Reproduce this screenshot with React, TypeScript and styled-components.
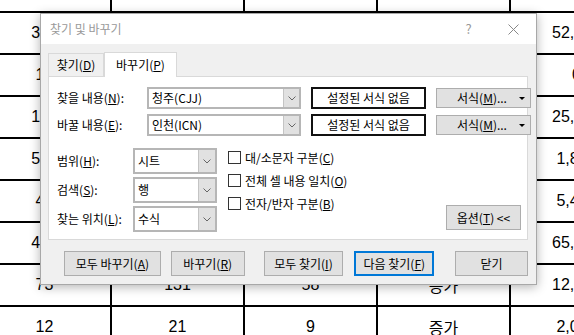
import React from "react";
import styled, { createGlobalStyle } from "styled-components";

const Global = createGlobalStyle`
  html, body { margin: 0; padding: 0; width: 574px; height: 335px; overflow: hidden; background: #fff; }
  body { font-family: "Noto Sans CJK KR", sans-serif; }
`;

const Page = styled.div`
  position: relative;
  width: 574px;
  height: 335px;
  overflow: hidden;
`;

const Sheet = styled.div`
  display: grid;
  grid-template-columns: repeat(5, 133px);
  grid-auto-rows: 42px;
  margin: -29px 0 0 -21px;
`;

const Cell = styled.div`
  box-sizing: border-box;
  border-right: 2px solid #000;
  border-bottom: 2px solid #000;
  display: flex;
  align-items: center;
  justify-content: center;
  font-family: "Liberation Sans", "Noto Sans CJK KR", sans-serif;
  font-size: 16px;
  color: #000;
  white-space: nowrap;
`;

const Dialog = styled.div`
  position: absolute;
  left: 40px;
  top: 13px;
  width: 497px;
  box-sizing: border-box;
  border: 1px solid #a8a8a8;
  background: #f0f0f0;
  box-shadow: 0 2px 10px rgba(0, 0, 0, 0.3);
  font-family: "Noto Sans CJK KR", sans-serif;
  font-size: 12px;
  line-height: 14px;
  color: #000;
`;

const TitleBar = styled.div`
  height: 30px;
  background: #fff;
  display: flex;
  align-items: center;
  padding-left: 9px;
`;

const Title = styled.div`
  color: #999;
  flex: 1;
`;

const TitleBtn = styled.div`
  width: 45px;
  height: 30px;
  display: flex;
  align-items: center;
  justify-content: center;
  color: #999;
  font-size: 13px;
`;

const Body = styled.div`
  padding: 8px 8px 8px 7px;
`;

const Tabs = styled.div`
  display: flex;
  align-items: flex-end;
  height: 24px;
`;

const Tab = styled.div<{ $active?: boolean; $w: number }>`
  box-sizing: border-box;
  width: ${(p) => p.$w}px;
  height: ${(p) => (p.$active ? 25 : 23)}px;
  margin-bottom: ${(p) => (p.$active ? -1 : 0)}px;
  background: ${(p) => (p.$active ? "#fff" : "#f0f0f0")};
  border: 1px solid #d9d9d9;
  border-bottom: none;
  position: relative;
  z-index: ${(p) => (p.$active ? 1 : 0)};
  display: flex;
  align-items: center;
  justify-content: center;
`;

const Panel = styled.div`
  box-sizing: border-box;
  height: 164px;
  background: #fff;
  border: 1px solid #d9d9d9;
  padding: 10px 6px 0 8px;
`;

const FindRow = styled.div<{ $mt?: number }>`
  display: grid;
  grid-template-columns: 80px 154px 115px 95px;
  column-gap: 10px;
  align-items: center;
  height: 22px;
  margin-top: ${(p) => p.$mt ?? 0}px;
`;

const Label = styled.div`
  white-space: nowrap;
`;

const Combo = styled.div<{ $h: number }>`
  box-sizing: border-box;
  height: ${(p) => p.$h}px;
  border: 2px solid #b6b6b6;
  background: #fff;
  display: flex;
  align-items: stretch;
`;

const ComboText = styled.div`
  flex: 1;
  display: flex;
  align-items: center;
  padding-left: 3px;
  white-space: nowrap;
`;

const DropBtn = styled.div<{ $w: number }>`
  width: ${(p) => p.$w}px;
  background: #e1e1e1;
  border-left: 1px solid #c4c4c4;
  display: flex;
  align-items: center;
  justify-content: center;
`;

const FormatBox = styled.div`
  box-sizing: border-box;
  height: 22px;
  border: 2px solid #111;
  display: flex;
  align-items: center;
  justify-content: center;
  white-space: nowrap;
`;

const FormatBtn = styled.div`
  box-sizing: border-box;
  height: 20px;
  background: #e1e1e1;
  border: 1px solid #adadad;
  display: flex;
  align-items: center;
  padding: 0 5px 0 20px;
  white-space: nowrap;
`;

const Caret = styled.span`
  margin-left: auto;
  width: 0;
  height: 0;
  border-left: 3px solid transparent;
  border-right: 3px solid transparent;
  border-top: 3px solid #000;
`;

const Lower = styled.div`
  display: flex;
  margin-top: 12px;
`;

const OptGrid = styled.div`
  display: grid;
  grid-template-columns: 76px 84px;
  grid-auto-rows: 26px;
  row-gap: 3px;
  align-items: center;
`;

const Checks = styled.div`
  display: flex;
  flex-direction: column;
  gap: 10px;
  margin-left: 11px;
  padding-top: 3px;
`;

const CheckItem = styled.label`
  display: flex;
  align-items: center;
  gap: 4px;
  height: 13px;
  white-space: nowrap;
`;

const Box = styled.span`
  box-sizing: border-box;
  width: 13px;
  height: 13px;
  border: 1px solid #333;
  background: #fff;
`;

const Button = styled.div<{ $w: number; $ml?: number; $primary?: boolean }>`
  box-sizing: border-box;
  width: ${(p) => p.$w}px;
  height: 25px;
  margin-left: ${(p) => p.$ml ?? 0}px;
  background: #e1e1e1;
  border: ${(p) => (p.$primary ? "2px solid #0078d7" : "1px solid #adadad")};
  display: flex;
  align-items: center;
  justify-content: center;
  white-space: nowrap;
`;

const OptionsBtn = styled(Button)`
  margin-left: auto;
  align-self: flex-end;
  margin-bottom: 2px;
`;

const ButtonRow = styled.div`
  display: flex;
  margin-top: 11px;
  padding-left: 16px;
`;

const Chevron = () => (
  <svg width="8" height="5" viewBox="0 0 8 5">
    <polyline points="0.5,0.5 4,4 7.5,0.5" fill="none" stroke="#666" strokeWidth="1" />
  </svg>
);

const sheetRows: string[][] = [
  ["", "", "", "", ""],
  ["312", "", "", "", "52,310"],
  ["15", "", "", "", "0"],
  ["128", "", "", "", "25,480"],
  ["540", "", "", "", "1,830"],
  ["42", "", "", "", "5,420"],
  ["415", "", "", "", "65,120"],
  ["73", "131", "58", "증가", "12,650"],
  ["12", "21", "9", "증가", "2,040"],
];

export default function App() {
  return (
    <Page>
      <Global />
      <Sheet>
        {sheetRows.map((r, i) => r.map((c, j) => <Cell key={`${i}-${j}`}>{c}</Cell>))}
      </Sheet>
      <Dialog>
        <TitleBar>
          <Title>찾기 및 바꾸기</Title>
          <TitleBtn>?</TitleBtn>
          <TitleBtn>
            <svg width="11" height="11" viewBox="0 0 11 11">
              <path d="M0.5 0.5 L10.5 10.5 M10.5 0.5 L0.5 10.5" stroke="#888" strokeWidth="1" />
            </svg>
          </TitleBtn>
        </TitleBar>
        <Body>
          <Tabs>
            <Tab $w={56}>찾기(<u>D</u>)</Tab>
            <Tab $w={73} $active>바꾸기(<u>P</u>)</Tab>
          </Tabs>
          <Panel>
            <FindRow>
              <Label>찾을 내용(<u>N</u>):</Label>
              <Combo $h={22}>
                <ComboText>청주(CJJ)</ComboText>
                <DropBtn $w={15}><Chevron /></DropBtn>
              </Combo>
              <FormatBox>설정된 서식 없음</FormatBox>
              <FormatBtn>서식(<u>M</u>)...<Caret /></FormatBtn>
            </FindRow>
            <FindRow $mt={5}>
              <Label>바꿀 내용(<u>E</u>):</Label>
              <Combo $h={22}>
                <ComboText>인천(ICN)</ComboText>
                <DropBtn $w={15}><Chevron /></DropBtn>
              </Combo>
              <FormatBox>설정된 서식 없음</FormatBox>
              <FormatBtn>서식(<u>M</u>)...<Caret /></FormatBtn>
            </FindRow>
            <Lower>
              <OptGrid>
                <Label>범위(<u>H</u>):</Label>
                <Combo $h={26}>
                  <ComboText>시트</ComboText>
                  <DropBtn $w={16}><Chevron /></DropBtn>
                </Combo>
                <Label>검색(<u>S</u>):</Label>
                <Combo $h={26}>
                  <ComboText>행</ComboText>
                  <DropBtn $w={16}><Chevron /></DropBtn>
                </Combo>
                <Label>찾는 위치(<u>L</u>):</Label>
                <Combo $h={26}>
                  <ComboText>수식</ComboText>
                  <DropBtn $w={16}><Chevron /></DropBtn>
                </Combo>
              </OptGrid>
              <Checks>
                <CheckItem><Box /><span>대/소문자 구분(<u>C</u>)</span></CheckItem>
                <CheckItem><Box /><span>전체 셀 내용 일치(<u>O</u>)</span></CheckItem>
                <CheckItem><Box /><span>전자/반자 구분(<u>B</u>)</span></CheckItem>
              </Checks>
              <OptionsBtn $w={75}>옵션(<u>T</u>) &lt;&lt;</OptionsBtn>
            </Lower>
          </Panel>
          <ButtonRow>
            <Button $w={97}>모두 바꾸기(<u>A</u>)</Button>
            <Button $w={74} $ml={10}>바꾸기(<u>R</u>)</Button>
            <Button $w={80} $ml={19}>모두 찾기(<u>I</u>)</Button>
            <Button $w={80} $ml={11} $primary>다음 찾기(<u>F</u>)</Button>
            <Button $w={73} $ml={21}>닫기</Button>
          </ButtonRow>
        </Body>
      </Dialog>
    </Page>
  );
}
